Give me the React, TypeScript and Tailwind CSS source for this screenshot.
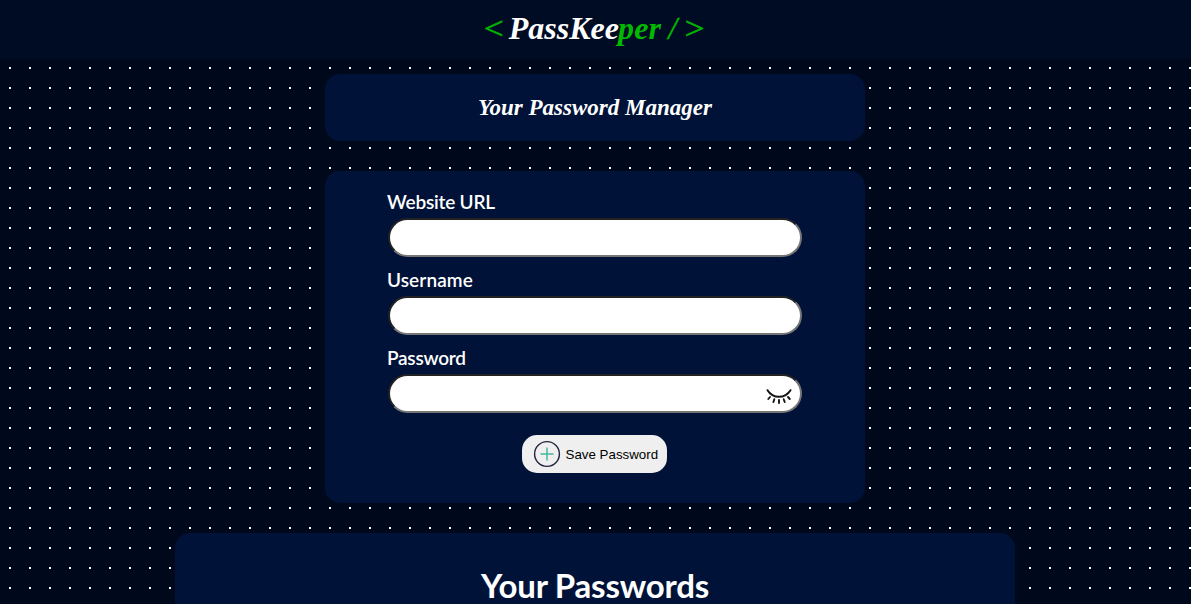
import React from "react";

function Field({ label, tracking, children }: { label: string; tracking: string; children?: React.ReactNode }) {
  return (
    <label className="block h-[78px]">
      <span className={`-ml-px block h-[29px] whitespace-nowrap font-['Lato',sans-serif] text-[19px] font-semibold leading-[25px] text-white ${tracking}`}>
        {label}
      </span>
      <span className="relative block">
        <input className="block h-[39px] w-[414px] rounded-[20px] border-2 border-t-[#222] border-r-[#767676] border-b-[#767676] border-l-[#222] bg-white px-4 outline-none" />
        {children}
      </span>
    </label>
  );
}

function ClosedEye() {
  return (
    <svg className="absolute top-[12px] right-[9px]" width="28" height="20" viewBox="0 0 28 20" fill="none" stroke="#151515" strokeWidth="2" strokeLinecap="round">
      <path d="M2.500 4.200C8 13 20 13 25.500 4.200" />
      <path d="M5 11L3.300 13M9.300 13.200L8.400 16M14 14V17M18.700 13.200L19.700 16M23 11L24.800 13" strokeWidth="1.900" />
    </svg>
  );
}

function PlusCircle() {
  return (
    <svg className="shrink-0" width="28" height="28" viewBox="0 0 28 28" fill="none">
      <circle cx="14" cy="14" r="12.400" stroke="#25233f" strokeWidth="1.400" />
      <path d="M14 7.500V20.500M7.500 14H20.500" stroke="#43b89f" strokeWidth="1.500" />
    </svg>
  );
}

export default function App() {
  return (
    <div className="h-[604px] overflow-hidden bg-[#00081b]">
      <header className="flex h-[59px] items-baseline justify-center bg-[#000b24] pt-[10px] font-['Liberation_Serif',serif] text-[32px] leading-[36px] font-bold italic whitespace-pre text-[#00b900]">
        <span className="mr-[5px] inline-block scale-x-[1.14] text-[31px] font-normal [-webkit-text-stroke:0.5px_#00b900]">{"<"}</span>
        <span className="text-white">PassKee</span>
        <span className="-ml-px tracking-[0.2px]">per</span>
        <span className="-ml-px font-normal [-webkit-text-stroke:0.4px_#00b900]">{" /"}</span>
        <span className="mr-[3px] ml-[7px] inline-block scale-x-[1.14] text-[31px] font-normal [-webkit-text-stroke:0.5px_#00b900]">{">"}</span>
      </header>
      <main className="flex h-[545px] flex-col items-center bg-[conic-gradient(from_270deg_at_2px_2px,#fff_90deg,transparent_0)] bg-[length:20px_20px] bg-[position:9px_8px] pt-[15px]">
        <section className="mr-px flex h-[67px] w-[540px] shrink-0 items-center justify-center rounded-[15px] bg-[#001238]">
          <h2 className="pt-[2px] font-['Liberation_Serif',serif] text-[23px] font-bold italic text-white">Your Password Manager</h2>
        </section>
        <form className="mt-[30px] mr-px flex h-[332px] w-[540px] shrink-0 flex-col items-center rounded-[15px] bg-[#001238] pt-[18px]">
          <div>
            <Field label="Website URL" tracking="tracking-[-0.2px]" />
            <Field label="Username" tracking="tracking-[0.1px]" />
            <Field label="Password" tracking="tracking-[-0.25px]"><ClosedEye /></Field>
          </div>
          <button type="button" className="mt-[12px] mr-[2px] flex h-[38px] w-[145px] items-center gap-[5px] rounded-[15px] bg-[#efefef] pl-[11px] font-['Liberation_Sans',sans-serif] text-[13.333px] whitespace-nowrap text-black">
            <PlusCircle />
            <span className="pt-px">Save Password</span>
          </button>
        </form>
        <section className="mt-[30px] mr-px flex h-[200px] w-[840px] shrink-0 justify-center rounded-t-[15px] bg-[#001238] pt-[33px]">
          <h1 className="font-['Lato',sans-serif] text-[33px] font-bold leading-[38px] tracking-[-0.2px] text-white">Your Passwords</h1>
        </section>
      </main>
    </div>
  );
}
